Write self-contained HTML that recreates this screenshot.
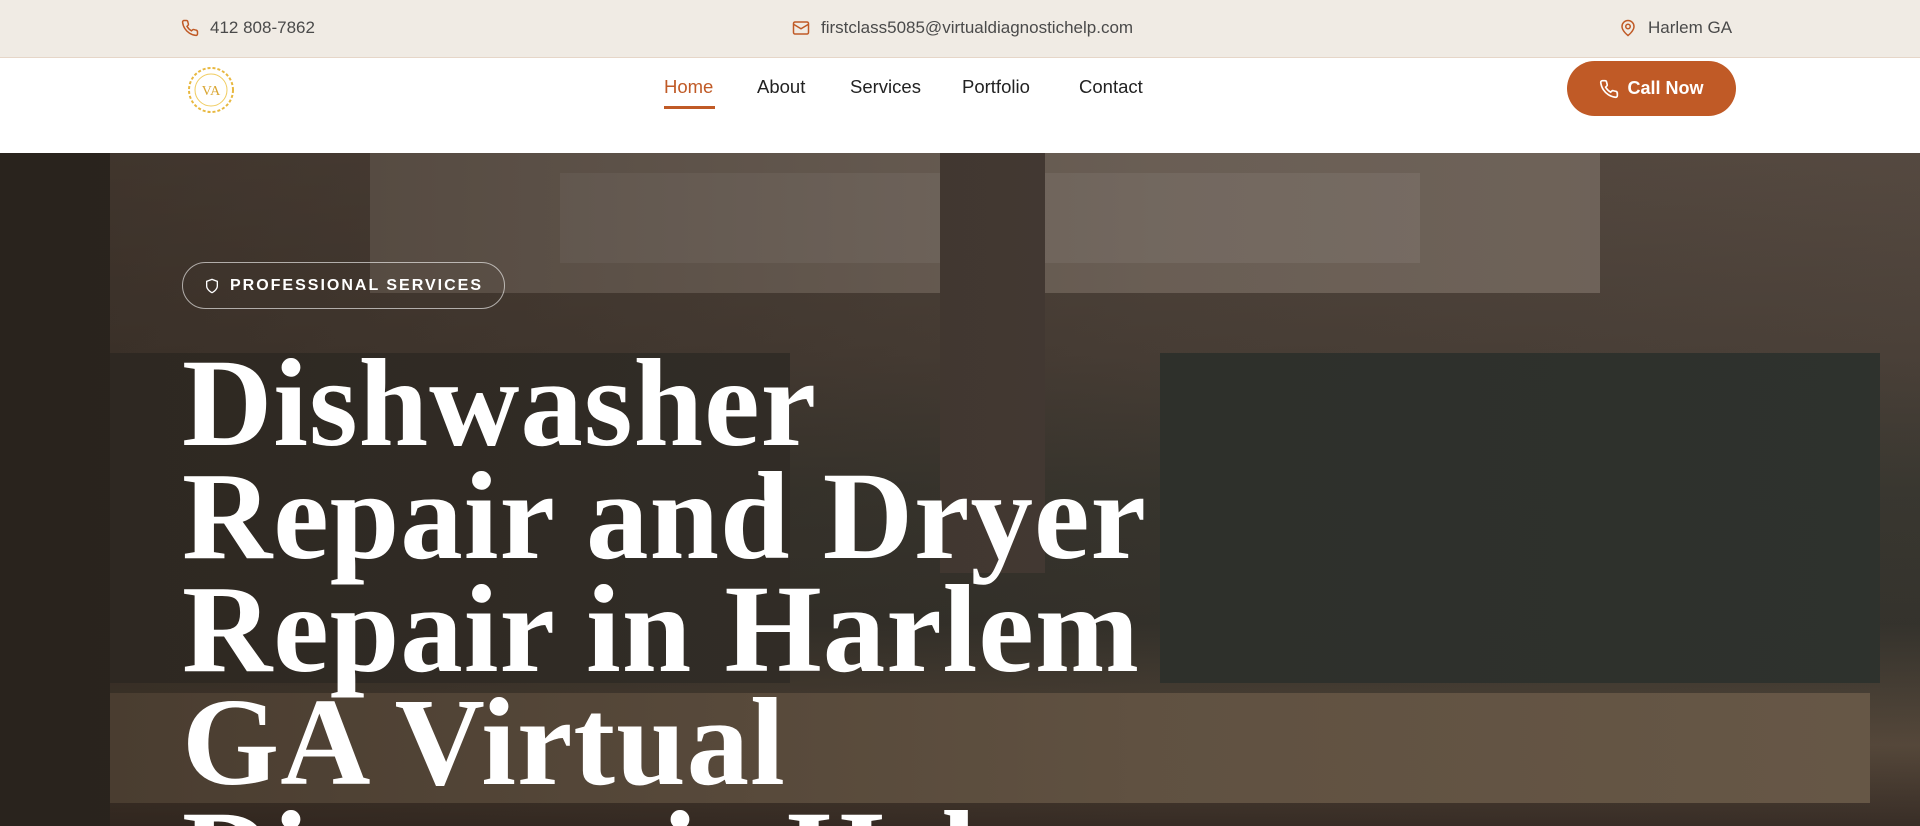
<!DOCTYPE html>
<html><head><meta charset="utf-8"><style>
*{margin:0;padding:0;box-sizing:border-box}
html,body{width:1920px;height:826px;overflow:hidden}
body{font-family:"Liberation Sans",sans-serif;background:#fff;position:relative}
.top{position:absolute;left:0;top:0;width:1920px;height:58px;background:#f0ebe4;border-bottom:1px solid #e6d6c8;font-size:17px;color:#4a4a4a}
.top span{position:absolute;top:18px;display:flex;align-items:center;gap:11px}
.nav{position:absolute;top:58px;left:0;width:1920px;height:95px;background:#fff}
.nav a{position:absolute;top:18px;font-size:18.5px;color:#222;text-decoration:none}
.hero{position:absolute;top:153px;left:0;width:1920px;height:673px;overflow:hidden;background:#4a3f36}
.hero div{position:absolute}
.btn{position:absolute;left:1567px;top:3px;width:169px;height:55px;border-radius:28px;background:#c05a26;color:#fff;font-weight:bold;font-size:18px;display:flex;align-items:center;justify-content:center;gap:8px}
h1{position:absolute;left:182px;top:195px;font-family:"Liberation Serif",serif;font-weight:bold;font-size:125px;line-height:113px;color:#fff;letter-spacing:1px;white-space:nowrap}
.badge{position:absolute;left:182px;top:109px;width:323px;height:47px;border:1.5px solid rgba(255,255,255,.6);border-radius:24px;color:#fff;font-weight:bold;font-size:16px;letter-spacing:2px;display:flex;align-items:center;justify-content:center;gap:10px}
</style></head><body>
<div class="top">
<span style="left:181px"><svg width="18" height="18" viewBox="0 0 24 24" fill="none" stroke="#c05a26" stroke-width="2"><path d="M22 16.9v3a2 2 0 0 1-2.2 2 19.8 19.8 0 0 1-8.6-3.1 19.5 19.5 0 0 1-6-6A19.8 19.8 0 0 1 2.1 4.2 2 2 0 0 1 4.1 2h3a2 2 0 0 1 2 1.7c.1.9.4 1.8.7 2.7a2 2 0 0 1-.5 2.1L8 9.8a16 16 0 0 0 6 6l1.3-1.3a2 2 0 0 1 2.1-.4c.9.3 1.8.6 2.7.7a2 2 0 0 1 1.7 2z"/></svg>412 808-7862</span>
<span style="left:792px"><svg width="18" height="18" viewBox="0 0 24 24" fill="none" stroke="#c05a26" stroke-width="2"><rect x="2" y="4" width="20" height="16" rx="2"/><path d="M22 7l-10 6L2 7"/></svg>firstclass5085@virtualdiagnostichelp.com</span>
<span style="left:1619px"><svg width="18" height="20" viewBox="0 0 24 24" fill="none" stroke="#c05a26" stroke-width="2"><path d="M20 10c0 6-8 12-8 12S4 16 4 10a8 8 0 0 1 16 0z"/><circle cx="12" cy="10" r="3"/></svg>Harlem GA</span>
</div>
<div class="nav">
<svg style="position:absolute;left:184px;top:6px" width="55" height="52" viewBox="0 0 55 52"><circle cx="27" cy="26" r="22" fill="none" stroke="#e8b840" stroke-width="2" stroke-dasharray="3 2"/><circle cx="27" cy="26" r="16" fill="none" stroke="#f0cc60" stroke-width="1"/><text x="27" y="31" font-family="Liberation Serif" font-size="14" fill="#d9a530" text-anchor="middle">VA</text></svg>
<a style="left:664px;color:#c05a26">Home</a>
<div style="position:absolute;left:664px;top:48px;width:51px;height:3px;background:#c05a26"></div>
<a style="left:757px">About</a>
<a style="left:850px">Services</a>
<a style="left:962px">Portfolio</a>
<a style="left:1079px">Contact</a>
<div class="btn"><svg width="20" height="20" viewBox="0 0 24 24" fill="none" stroke="#fff" stroke-width="2"><path d="M22 16.9v3a2 2 0 0 1-2.2 2 19.8 19.8 0 0 1-8.6-3.1 19.5 19.5 0 0 1-6-6A19.8 19.8 0 0 1 2.1 4.2 2 2 0 0 1 4.1 2h3a2 2 0 0 1 2 1.7c.1.9.4 1.8.7 2.7a2 2 0 0 1-.5 2.1L8 9.8a16 16 0 0 0 6 6l1.3-1.3a2 2 0 0 1 2.1-.4c.9.3 1.8.6 2.7.7a2 2 0 0 1 1.7 2z"/></svg>Call Now</div>
</div>
<div class="hero">
<div style="left:0;top:0;width:1920px;height:673px;background:linear-gradient(180deg,#5a4e45 0%,#4e443c 30%,#3b3a33 50%,#36352f 70%,#5a4c3e 88%,#3a2f28 100%)"></div>
<div style="left:370px;top:0;width:1230px;height:140px;background:#7a6e64"></div>
<div style="left:560px;top:20px;width:860px;height:90px;background:#857a71"></div>
<div style="left:940px;top:0;width:105px;height:420px;background:#4a403a"></div>
<div style="left:1160px;top:200px;width:720px;height:330px;background:#2f3430"></div>
<div style="left:110px;top:200px;width:680px;height:330px;background:#35332e"></div>
<div style="left:110px;top:540px;width:1760px;height:110px;background:#6e5e4c"></div>
<div style="left:0;top:0;width:110px;height:673px;background:#2a2925"></div>
<div style="left:0;top:0;width:1920px;height:673px;background:linear-gradient(90deg,rgba(40,30,22,.55),rgba(40,30,22,.2) 60%,rgba(40,30,22,.1))"></div>
<div class="badge"><svg width="16" height="18" viewBox="0 0 24 24" fill="none" stroke="#fff" stroke-width="2"><path d="M12 22s8-4 8-10V5l-8-3-8 3v7c0 6 8 10 8 10z"/></svg>PROFESSIONAL SERVICES</div>
<h1>Dishwasher<br>Repair and Dryer<br>Repair in Harlem<br>GA Virtual<br>Diagnostic Help</h1>
</div>
</body></html>
